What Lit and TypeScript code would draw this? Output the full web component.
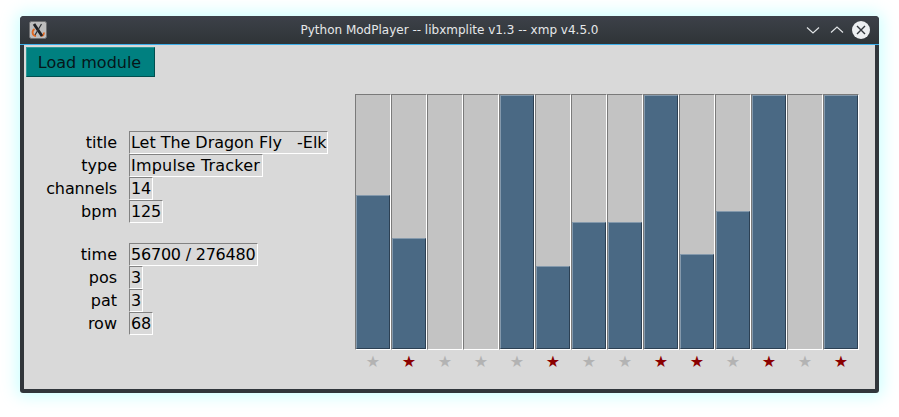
import { LitElement, html, css, svg } from "lit";
import { customElement } from "lit/decorators.js";

const bars = [154, 111, 0, 0, 254, 83, 127, 127, 254, 95, 138, 254, 0, 254];
const lit = [false, true, false, false, false, true, false, false, true, true, false, true, false, true];
type Row = { label: string; value: string; width: number; spacing: number };
const group1: Row[] = [
  { label: "title", value: "Let The Dragon Fly   -Elk", width: 199, spacing: -0.04 },
  { label: "type", value: "Impulse Tracker", width: 134, spacing: 0.2 },
  { label: "channels", value: "14", width: 24, spacing: -0.18 },
  { label: "bpm", value: "125", width: 34, spacing: -0.18 },
];
const group2: Row[] = [
  { label: "time", value: "56700 / 276480", width: 129, spacing: -0.22 },
  { label: "pos", value: "3", width: 14, spacing: 0 },
  { label: "pat", value: "3", width: 14, spacing: 0 },
  { label: "row", value: "68", width: 24, spacing: -0.18 },
];

@customElement("app-root")
export class AppRoot extends LitElement {
  static styles = css`
    :host { display: block; width: 899px; height: 417px; overflow: hidden; background: #fff; font-family: "DejaVu Sans", sans-serif; }
    .page { padding: 16px 20px 24px; box-sizing: border-box; height: 417px; }
    .window { height: 377px; display: flex; flex-direction: column; border-radius: 4px 4px 3px 3px; background: #31363b; box-shadow: 0 0 16px 3px rgba(185, 255, 255, 0.75); overflow: hidden; }
    .titlebar { height: 28px; flex: none; display: grid; grid-template-columns: 1fr auto 1fr; align-items: center; background: linear-gradient(#3d4149, #2f3437); color: #e6e8ea; font-size: 12px; padding: 0 9px; border-bottom: 1px solid #3daee9; }
    .appicon { width: 18px; height: 18px; display: block; }
    .wintitle { text-align: center; white-space: nowrap; }
    .controls { display: flex; align-items: center; justify-content: flex-end; gap: 4px; }
    .controls svg { display: block; }
    .close { margin-left: 1px; }
    .body { flex: 1; margin: 0 4px 4px; background: #d9d9d9; display: flex; flex-direction: column; min-height: 0; }
    button { align-self: flex-start; margin: 2px 0 0 2px; width: 129px; height: 30px; padding: 0 2px 0 0; background: #008080; border: 1px solid #004f4f; border-top-color: #2d9a9a; border-left-color: #2d9a9a; color: #06161a; font: 16px "DejaVu Sans", sans-serif; }
    .main { display: flex; margin-top: 17px; }
    .info { width: 331px; flex: none; padding-top: 37px; display: flex; flex-direction: column; gap: 20px; font-size: 16px; color: #000; }
    .group { display: grid; grid-template-columns: 93px max-content; column-gap: 12px; justify-content: start; }
    .label { text-align: right; height: 23px; line-height: 23px; }
    .label.tight { letter-spacing: -0.1px; }
    .value { justify-self: start; box-sizing: border-box; height: 23px; line-height: 21px; padding: 0 0 0 1px; border: 1px solid; border-color: #828282 #fff #fff #828282; white-space: pre; overflow: hidden; }
    .channels { display: flex; flex-direction: column; }
    .bars { display: flex; height: 256px; }
    .bar { width: 34px; height: 254px; border: 1px solid; border-color: #7a7a7a #fff #fff #7a7a7a; background: #c3c3c3; display: flex; flex-direction: column; justify-content: flex-end; }
    .fill { background: #4a6984; border: 1px solid; border-color: #8499ac #2c4053 #2c4053 #8499ac; box-sizing: border-box; }
    .stars { display: flex; height: 24px; }
    .star { width: 36px; text-align: center; font-size: 16px; line-height: 23px; color: #b3b3b3; }
    .star.on { color: #8b0000; }
  `;

  private group(rows: Row[]) {
    return html`<div class="group">
      ${rows.map((r) => html`<div class="label ${r.label === "channels" ? "tight" : ""}">${r.label}</div><div class="value" style="width:${r.width}px;letter-spacing:${r.spacing}px">${r.value}</div>`)}
    </div>`;
  }

  render() {
    return html`<div class="page"><div class="window">
      <div class="titlebar">
        <svg class="appicon" viewBox="0 0 18 18">
          <rect x="0.5" y="0.5" width="17" height="17" rx="2" fill="#bdbdbd" stroke="#6f7072"/>
          <path d="M5.5 8 C2.5 10 3 14.5 7 15.2 M12 14.8 C14 15 15.2 13.5 14.8 11.5" stroke="#e0661f" stroke-width="1.8" fill="none"/>
          <path d="M5 3 L13 15" stroke="#1f2124" stroke-width="2.8" fill="none"/>
          <path d="M12.5 3 L6 14" stroke="#2f3236" stroke-width="1.2" fill="none"/>
        </svg>
        <div class="wintitle">Python ModPlayer -- libxmplite v1.3 -- xmp v4.5.0</div>
        <div class="controls">
          <svg width="20" height="20" viewBox="0 0 20 20">${svg`<path d="M4 7.5 L10 13 L16 7.5" stroke="#dfe2e4" stroke-width="1.2" fill="none"/>`}</svg>
          <svg width="20" height="20" viewBox="0 0 20 20">${svg`<path d="M4 12.5 L10 7 L16 12.5" stroke="#dfe2e4" stroke-width="1.2" fill="none"/>`}</svg>
          <svg class="close" width="18" height="18" viewBox="0 0 18 18">${svg`<circle cx="9" cy="9" r="9" fill="#eceff1"/><path d="M5 5 L13 13 M13 5 L5 13" stroke="#31363b" stroke-width="1.4"/>`}</svg>
        </div>
      </div>
      <div class="body">
        <button>Load module</button>
        <div class="main">
          <div class="info">${this.group(group1)}${this.group(group2)}</div>
          <div class="channels">
            <div class="bars">
              ${bars.map((h) => html`<div class="bar">${h ? html`<div class="fill" style="height:${h}px"></div>` : ""}</div>`)}
            </div>
            <div class="stars">
              ${lit.map((on) => html`<div class="star ${on ? "on" : ""}">★</div>`)}
            </div>
          </div>
        </div>
      </div>
    </div></div>`;
  }
}
